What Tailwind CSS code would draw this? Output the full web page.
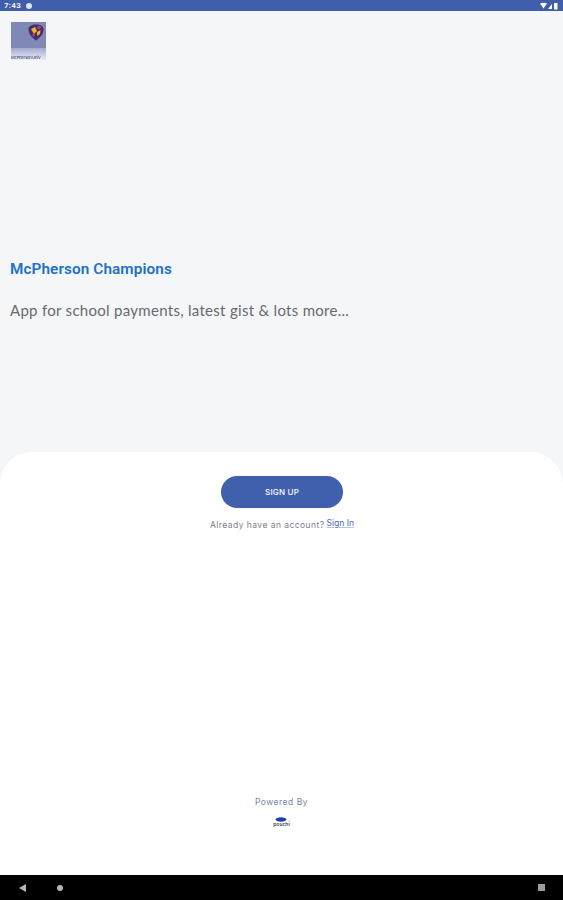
<!DOCTYPE html>
<html lang="en">
<head>
    <meta charset="UTF-8">
    <title>McPherson Champions</title>
    <script src="https://cdn.jsdelivr.net/npm/@tailwindcss/browser@4"></script>
</head>
<body class="bg-[#f4f6f8] font-['Inter',sans-serif]">
    <div class="flex flex-col w-[563px] h-[900px] overflow-hidden">
        <!-- Status bar -->
        <div class="h-[11px] shrink-0 bg-[#3f5dab] flex items-center justify-between pl-[4px] pr-[5px] text-white">
            <div class="flex items-center gap-[5px]">
                <span class="text-[8px] leading-none font-semibold font-['Roboto',sans-serif] tracking-[0.3px]">7:43</span>
                <span class="w-[6px] h-[6px] rounded-full bg-[#dfe5f2]"></span>
            </div>
            <svg width="18" height="8" viewBox="0 0 18 8" fill="#ffffff">
                <path d="M0 1.5 Q3.5 0 7 1.5 L3.5 6.5 Z"/>
                <path d="M8 7 L12 2 V7 Z"/>
                <rect x="14" y="1" width="3.5" height="6.5" rx="0.5"/>
            </svg>
        </div>

        <!-- Intro -->
        <div class="h-[441px] shrink-0 flex flex-col pl-[10px]">
            <!-- Logo -->
            <div class="mt-[11px] ml-[1px] w-[35px] h-[38px] bg-[#8088b8] flex flex-col relative">
                <svg class="absolute left-[17px] top-[2px]" width="16" height="17" viewBox="0 0 16 17">
                    <path d="M8 16.5 C3 13 0.5 9.5 0.5 5.5 C0.5 2 3.5 0.5 8 0.5 C12.5 0.5 15.5 2 15.5 5.5 C15.5 9.5 13 13 8 16.5 Z" fill="#4a2a6c"/>
                    <path d="M3 5 L7 3 L9 7 L6 10 Z" fill="#e3b62f"/>
                    <path d="M9 8 L12.5 6 L12 10 L9 12 Z" fill="#e3b62f"/>
                    <circle cx="11" cy="3.5" r="1.8" fill="#b5455a"/>
                    <circle cx="5.5" cy="11" r="1.3" fill="#b5455a"/>
                </svg>
                <div class="mt-auto h-[12px] bg-gradient-to-b from-[#a4aacf] to-[#eceef5] flex flex-col justify-end overflow-hidden">
                    <span class="text-[4px] leading-[5px] font-bold text-[#6a7198] whitespace-nowrap tracking-tighter blur-[0.3px]">McPherson Univ</span>
                </div>
            </div>

            <h1 class="mt-[199px] text-[15.3px] leading-[20px] font-semibold text-[#2070c8] font-['Roboto',sans-serif] tracking-[0.1px]">McPherson Champions</h1>
            <p class="mt-[21px] text-[15px] leading-[20px] text-[#666a70] font-['Lato',sans-serif] tracking-[0.29px]">App for school payments, latest gist &amp; lots more...</p>
        </div>

        <!-- Sign up sheet -->
        <div class="flex-1 bg-white rounded-t-[32px] flex flex-col items-center">
            <button class="mt-[24px] ml-[1px] w-[122px] h-[32px] rounded-full bg-[#4060ae] text-white text-[8px] leading-[12px] font-medium tracking-[0.2px] flex items-center justify-center pb-[1px]">SIGN UP</button>
            <div class="mt-[9px] ml-[1px] flex items-start gap-[2px] text-[8.5px] leading-[12px] text-[#7d808c] tracking-[0.45px]">
                <span class="mt-[2px]">Already have an account?</span>
                <a href="#" class="text-[#4a68b8] underline decoration-[#4a68b8]/40 tracking-normal">Sign In</a>
            </div>

            <div class="mt-auto mb-[47px] flex flex-col items-center">
                <span class="text-[8.5px] leading-[12px] text-[#7b84a8] tracking-[0.5px]">Powered By</span>
                <svg class="mt-[9px]" width="14" height="5" viewBox="0 0 14 5">
                    <ellipse cx="7" cy="2.5" rx="5.5" ry="2.2" fill="#1f3fa8"/>
                </svg>
                <span class="mt-[-1px] text-[5px] leading-[7px] font-semibold text-[#3a3f58]">pouchi</span>
            </div>
        </div>

        <!-- Navigation bar -->
        <div class="h-[25px] shrink-0 bg-black flex items-center justify-between pl-[19px] pr-[18px]">
            <div class="flex items-center gap-[31px]">
                <svg width="7" height="8" viewBox="0 0 7 8" fill="#b5b5b5"><path d="M7 0 V8 L0 4 Z"/></svg>
                <span class="w-[6px] h-[6px] rounded-full bg-[#b5b5b5]"></span>
            </div>
            <span class="w-[7px] h-[7px] bg-[#9c9c9c]"></span>
        </div>
    </div>
</body>
</html>
